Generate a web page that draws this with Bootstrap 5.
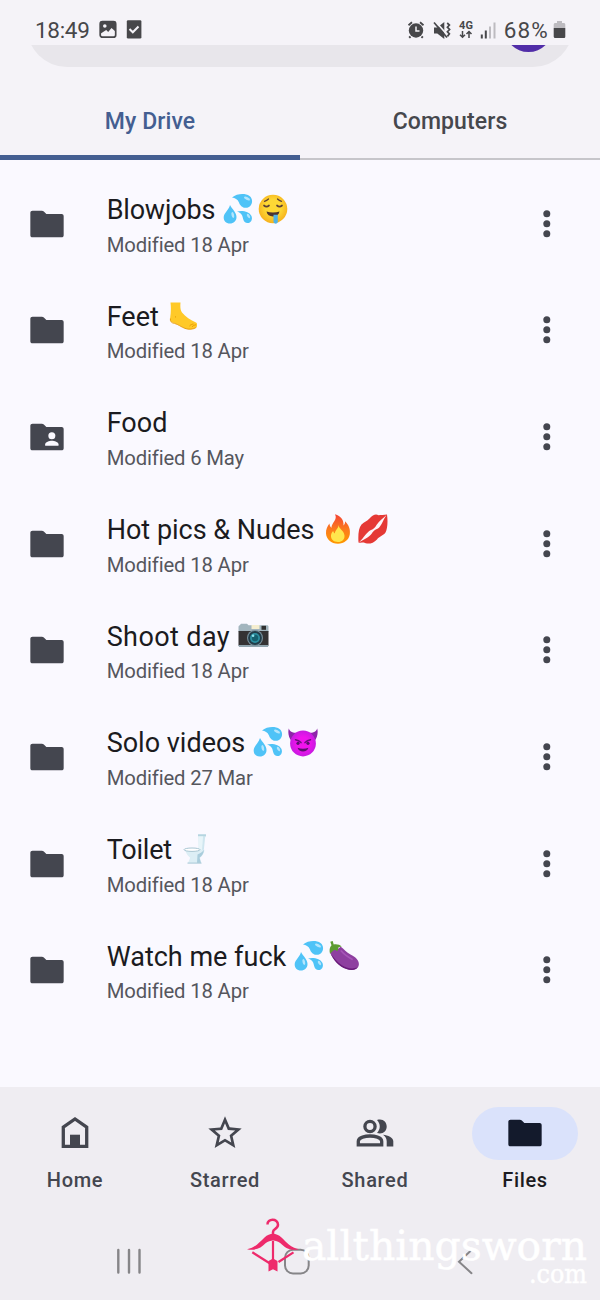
<!DOCTYPE html>
<html lang="en">
<head>
<meta charset="utf-8">
<meta name="viewport" content="width=device-width, initial-scale=1">
<title>Files - My Drive</title>
<link href="https://cdn.jsdelivr.net/npm/bootstrap@5.3.0/dist/css/bootstrap.min.css" rel="stylesheet">
<style>
  body { font-family: Roboto, "Liberation Sans", sans-serif; background: #faf9ff; color: #1b1b20; }
  svg { display: block; flex: none; }
  .phone { width: 600px; height: 1300px; overflow: hidden; }
  .top-area { background: #f5f3f8; height: 160px; }
  .status { height: 45px; padding: 14px 33px 0 35px; color: #47474a; font-size: 22.5px; line-height: 30px; }
  .status .clock { width: 64px; letter-spacing: -.3px; }
  .status .task-icon { margin-left: 9px; }
  .status .charge { margin-left: 4px; letter-spacing: 1.2px; }
  .search-clip { height: 21.5px; padding: 0 26.7px; }
  .search-pill { height: 80px; border-radius: 40px; background: #e8e6eb; padding: 16px 20.500px 0 0; }
  .avatar { width: 49px; height: 49px; background: #512da8; }
  .drive-tabs { height: 93.5px; }
  .drive-tabs .nav-link { height: 100%; padding: 38.6px 0 0; color: #46474d; font-weight: 500; font-size: 23px; line-height: 34px; letter-spacing: .1px; border-bottom: 2px solid #c6c5ca; border-radius: 0; }
  .drive-tabs .nav-link.active { color: #445e91; border-bottom: 5px solid #445e91; }
  .files { padding-top: 10.4px; height: 926.7px; }
  .file-row { height: 106.67px; padding: 0 33.3px 0 26.7px; color: #44464f; }
  .file-text { margin-left: 40px; padding-top: 4.4px; }
  .file-title { height: 34px; font-size: 27px; line-height: 34px; color: #1b1b20; gap: 5px; margin-bottom: 3.600px; }
  .file-title svg { margin-top: -2px; }
  .file-title .label-text { margin-right: 3px; white-space: nowrap; }
  .tight { letter-spacing: -.2px; }
  .wide { letter-spacing: .4px; }
  .file-sub { font-size: 20.3px; line-height: 28px; letter-spacing: -.15px; color: #55565d; }
  .bottom-nav { height: 120px; background: #efedf2; padding-top: 20px; color: #44464f; }
  .pill { width: 106.7px; height: 53.3px; }
  .on .pill { background: #dae2fb; color: #131a2c; }
  .bottom-nav .on { color: #1b1b20; }
  .tab-label { font-size: 20px; font-weight: 500; line-height: 26px; margin-top: 7px; letter-spacing: .65px; }
  .system-nav { height: 93.3px; background: #efedf2; }
  .watermark { left: 240px; top: 8px; }
</style>
</head>
<body>
<svg width="0" height="0" class="position-absolute" aria-hidden="true">
  <defs>
    <symbol id="folder" viewBox="0 0 24 24"><path fill="currentColor" d="M3.300 4h5.600c.5 0 .9.100 1.200.5L11.600 6h9.100c.8 0 1.300.5 1.300 1.300v11.400c0 .8-.5 1.300-1.300 1.300H3.300c-.8 0-1.300-.5-1.300-1.300V5.300C2 4.500 2.500 4 3.300 4z"/></symbol>
    <symbol id="dots" viewBox="0 0 40 40"><g fill="currentColor"><circle cx="19.800" cy="9.800" r="3.500"/><circle cx="19.800" cy="19.800" r="3.500"/><circle cx="19.800" cy="29.800" r="3.500"/></g></symbol>
    <symbol id="drops" viewBox="0 0 30 30">
      <g fill="#4fc3f7"><path d="M9 3.500C14-.5 22-1 26.500 2c4 3 3 9-.5 11-5 2.500-9-1-10-4.500C14.500 5 12 4 9 3.500z"/><path d="M7 11c2 4 6.500 7.500 6.500 12 0 4-3 6.500-6.500 6.500-4 0-6.500-2.500-6.300-6.500C1 19 6 15.500 7 11z"/><path d="M14 17.500c5-1.500 12.500 0 14.500 4.500 1.500 4-1 7.500-4.500 7-4.500-.5-3.500-6-5.500-8.500-1-1.500-2.500-2.500-4.500-3z"/></g>
      <g fill="#b3e5fc"><ellipse cx="24" cy="4.500" rx="3.300" ry="1.500" transform="rotate(25 24 4.500)"/><ellipse cx="9.800" cy="21" rx="1.300" ry="3" transform="rotate(-12 9.800 21)"/><ellipse cx="25.500" cy="22" rx="1.200" ry="2.400" transform="rotate(-35 25.500 22)"/></g>
    </symbol>
    <radialGradient id="gold" cx=".5" cy=".45" r=".55"><stop offset=".5" stop-color="#fdd835"/><stop offset="1" stop-color="#f6b01c"/></radialGradient>
    <symbol id="drool" viewBox="0 0 30 30">
      <circle cx="15" cy="15" r="14.300" fill="url(#gold)"/>
      <g fill="none" stroke="#5d4037" stroke-width="1.200" stroke-linecap="round"><path d="M6.500 7.300c1.500-.3 3-1.200 4-2.300M19.500 5c1 1.100 2.500 2 4 2.300"/><path d="M6 11.500c1.500 1.300 3.500 1.300 5 0M19 11.500c1.500 1.300 3.500 1.300 5 0" stroke-width="1.700"/></g>
      <path d="M8.500 17.500c4 1.300 9 1.300 13 0-.6 3.400-3 4.900-6.500 4.900s-5.900-1.500-6.500-4.900z" fill="#4e342e"/>
      <path d="M15.500 20.800h4.300v6.800c0 2.800-4.300 2.600-4.300 0z" fill="#4fb3e8"/>
    </symbol>
    <symbol id="foot" viewBox="0 0 30 30">
      <path d="M3.500 1.500h10c-.3 4-.3 7.500 1.500 10 3.500 4.500 8.500 7.500 14 10 1.700 1.200 1.500 3.500.3 4.800-2.800 2.300-7.800 2.500-11.300 1-4-1.600-6.500-4-10.500-5.300-3.300-.5-4.700-2.500-4.300-5.500.7-4.500 1-9.500.3-15z" fill="#ffc928"/>
      <path d="M3.400 17.500c-.4 2.800 1 4.500 4.100 4.900 4 1.100 6.500 3.500 10.500 5 3.500 1.400 8.500 1.100 11.300-1M22.500 25c1-1.200 2.500-1.800 4-2M25 26c1-1.300 2.300-2 4-2.200" fill="none" stroke="#e59600" stroke-width=".9"/><path d="M8 15.500l1 .8" stroke="#e59600"/>
    </symbol>
    <linearGradient id="flameFill" x1="0" y1="0" x2="0" y2="1"><stop offset="0" stop-color="#f44336"/><stop offset=".5" stop-color="#fb7a1e"/><stop offset="1" stop-color="#ff9800"/></linearGradient>
    <symbol id="flame" viewBox="0 0 30 30">
      <path d="M12 .3C18 1.800 21 6.500 20.500 11.500c1.300-1 1.700-2.500 1.500-4.200 4 4 5.500 8 4.800 13C26 26 21 29.700 15 29.700 8 29.700 3.500 25.500 3 19.500c-.3-4 1.500-7.500 3.500-10 .1 2 .7 3.500 2 4.200C8.300 9 15 6 12 .3z" fill="url(#flameFill)"/>
      <path d="M15.500 11c.5 4 5.500 5.500 6 10.500.3 4-2.500 6.500-6.500 6.500-4.500 0-7.300-2.700-7-6.700.2-2 1.200-3.300 2.200-4.300.2 1.200.8 2 1.800 2.500C11.500 16.500 15.500 14.500 15.500 11z" fill="#ffe64d"/>
    </symbol>
    <symbol id="kiss" viewBox="0 0 30 30">
      <path d="M.5 28.500C0 21 .5 14 3.500 10.500 6.500 7.500 9 7.500 11.500 4.500 15 0 18.500-.3 20.500 1.200 23 .8 26 1.200 29 .5c1 7 .5 14-1.500 18-2.500 3.500-6 3.500-8.500 7C15 30 9 30.500 6 28.500c-2 0-4 .5-5.500 0z" fill="#e53935"/>
      <path d="M1 28.500C6 23.500 9 18 12.500 16.300c3.500-1.500 4.500-2.800 6-5.300C21 7 25 4.500 28.500 1 25 6 23.500 12 20 14.500c-3.500 1.500-4.300 2.300-6 4.700C11 23.500 6 25 1 28.500z" fill="#fdf4f7"/>
    </symbol>
    <symbol id="camera" viewBox="0 0 30 30">
      <path d="M1 4.500l1.500-1.800h6L10 4.200h18.500c.8 0 1.500.5 1.500 1.500V11H0V6c0-.8.400-1.500 1-1.500z" fill="#a2b5be"/><path d="M0 10h30v14c0 .9-.6 1.500-1.500 1.500h-27C.6 25.500 0 24.900 0 24z" fill="#343233"/>
      <path d="M0 24h30v.5c0 .8-.6 1.400-1.500 1.400h-27c-.9 0-1.500-.6-1.500-1.400z" fill="#90a4ae"/><path d="M13 4h8v4h-8z" fill="#f5eed0"/><path d="M23 4.800h4.500v4H23z" fill="#303030"/>
      <circle cx="16.500" cy="17" r="8" fill="#78909c"/><circle cx="16.500" cy="17" r="6.900" fill="#223d49"/><circle cx="16.500" cy="17" r="5" fill="#2c8fa0"/><circle cx="16.500" cy="17" r="3.200" fill="#16606e"/><circle cx="14.600" cy="14.800" r="1.300" fill="#8ee4ee"/>
    </symbol>
    <radialGradient id="impFill"><stop offset=".5" stop-color="#ef13ed"/><stop offset="1" stop-color="#c71be0"/></radialGradient>
    <symbol id="imp" viewBox="0 0 30 30">
      <path d="M.8 1.500C2 5 5 5.800 9.500 6.200L3.500 14C.5 10.500-.3 5.500.8 1.500zM29.200 1.500C28 5 25 5.800 20.500 6.200l6 7.800c3-3.500 3.800-8.500 2.700-12.500z" fill="#8e24aa"/>
      <circle cx="15" cy="16.500" r="12.900" fill="url(#impFill)"/>
      <path d="M7.500 12.700c2 .3 4 1.300 5.500 2.900M22.500 12.700c-2 .3-4 1.300-5.500 2.900" fill="none" stroke="#6a0f7f" stroke-width="1.500" stroke-linecap="round"/><circle cx="10" cy="16.300" r="1.600" fill="#5a1070"/><circle cx="20" cy="16.300" r="1.600" fill="#5a1070"/>
      <path d="M9.500 20.800c3.300 1.300 7.700 1.300 11 0-1 2.500-2.800 3.700-5.500 3.700s-4.500-1.200-5.500-3.700z" fill="#5a1070"/>
    </symbol>
    <symbol id="toilet" viewBox="0 0 30 30">
      <path d="M18.500.8h7.300v2h-.6l-1.400 13.500h-5z" fill="#cfe6ef"/><path d="M18.500.8h4.700L22 16h-3.200z" fill="#e8f5f9"/><path d="M18 .3h8v1.900h-8z" fill="#b5d5e0"/>
      <path d="M5 15.800h19.500c-.5 4-2 6-4.500 8l1.200 5.200H8l2.200-5.200C7.500 21.800 6 19 5 15.800z" fill="#dceef5"/><path d="M17.500 20.500c3-1 5-2.700 6.500-4.700-.5 4-2 6-4.500 8l1.500 5.200h-4z" fill="#aacddc"/>
      <ellipse cx="12" cy="15.700" rx="8" ry="1.700" fill="#fff" stroke="#9fbfcd" stroke-width=".9"/><path d="M7.500 28.500h14v1.200h-14z" fill="#b0cfdb"/>
    </symbol>
    <symbol id="aubergine" viewBox="0 0 30 30">
      <path d="M4 7.500C8 9 10.500 7.500 11.500 5.500c3.500 2.500 6 6 10 8 5.500 2.500 9 6.500 8.300 10.500-.8 5-6.800 6-12.300 4C9.500 25.200 4.500 18 1.200 12z" fill="#8e3fa0"/>
      <path d="M12.300 10c3 3.500 6 5.500 10.700 8.300" fill="none" stroke="#a656b7" stroke-width="1.800" stroke-linecap="round"/><path d="M1.200 12c3 7 8.500 13.500 16.300 16 4.500 1.600 9 1.200 11.200-1.400-6 1.700-11.200.7-16.200-2.600C8 21 4.500 16.500 1.200 12z" fill="#6a1b7a"/>
      <path d="M1.300.8L3.700 0l1 3.400c3.500-.4 6 .2 8 2.300-1.500-.2-2.700.2-3.700 1.300.3 1.200 0 2.300-1 3.300-.8-1.200-2-1.500-3.300-1L1 12.800c-.8-3.500-.5-6.500 1.500-8.600z" fill="#5d9b31"/>
    </symbol>
  </defs>
</svg>

<div class="phone d-flex flex-column">
  <header class="top-area">
    <div class="status d-flex align-items-center">
      <span class="clock">18:49</span>
      <svg width="18" height="19" viewBox="0 0 18 19"><rect x="1.200" y="1.700" width="15.500" height="15.500" rx="2.300" fill="#f5f3f8" stroke="#47474a" stroke-width="1.700"/><path d="M1 3c0-1 .7-1.500 1.500-1.500h13c1 0 1.500.7 1.500 1.500v9l-4.500-4-3.300 4-2-2L1 14z" fill="#47474a"/><circle cx="5.800" cy="6" r="1.800" fill="#f5f3f8"/></svg>
      <svg class="task-icon me-auto" width="16" height="19" viewBox="0 0 16 19"><rect x=".8" y=".2" width="14.600" height="18.300" rx="1.300" fill="#47474a"/><path d="M3.500 9l3.300 3.300 5.700-5.800" fill="none" stroke="#f5f3f8" stroke-width="2"/></svg>
      <svg width="95" height="22" viewBox="0 0 95 22" fill="none" stroke="#47474a">
        <circle cx="11" cy="11.500" r="7.200" fill="#47474a" stroke="none"/><path d="M3.500 6.200L7 3.300M18.500 6.200L15 3.300" stroke-width="1.800"/><path d="M5.500 17.500l-1.300 1.300M16.500 17.500l1.300 1.300" stroke-width="2"/><path d="M11 7.500v4.500h3.500" stroke="#f5f3f8" stroke-width="1.500"/>
        <path d="M29 8.500h3.300l7-5.500v17l-7-5.500H29z" fill="#47474a" stroke="none"/><path d="M30.500 2.500l14 16" stroke="#f5f3f8" stroke-width="1.800"/><path d="M29 3.500l13 15" stroke-width="1.700"/><path d="M42.200 4l2.200 2-2 2.200 2.200 2.300-2.200 2.200 2 2.200-2 2.500" stroke-width="1.700"/>
        <text x="54" y="10" font-family="Roboto" font-size="11" font-weight="700" fill="#47474a" stroke="none" textLength="14">4G</text><path d="M57.500 12v6.500M55 15.800l2.500 2.500 2.500-2.500M64 19v-6.500M61.500 15L64 12.500l2.500 2.500" stroke-width="1.500"/>
        <path d="M76.800 15.500v4M80.800 11.500v8" stroke-width="2"/><path d="M85 7.500v12M89.500 3.500v16" stroke="#bdbbc0" stroke-width="2"/>
      </svg>
      <span class="charge">68%</span>
      <svg width="14" height="20" viewBox="0 0 14 20" class="ms-1"><path d="M4 1h5v2h1.800c.8 0 1.500.7 1.500 1.500V8H.7V4.500C.7 3.700 1.400 3 2.200 3H4z" fill="#bdbbc0"/><path d="M.7 8h11.600v8.500c0 1-.6 1.500-1.500 1.500H2.200c-.9 0-1.500-.6-1.500-1.500z" fill="#47474a"/></svg>
    </div>
    <div class="search-clip d-flex align-items-end overflow-hidden">
      <div class="search-pill w-100 d-flex justify-content-end"><div class="avatar rounded-circle"></div></div>
    </div>
    <nav class="drive-tabs nav nav-justified">
      <a class="nav-link active" href="#">My Drive</a>
      <a class="nav-link" href="#">Computers</a>
    </nav>
  </header>

  <main class="files">
    <div class="file-row d-flex align-items-center"><svg width="40" height="40"><use href="#folder"/></svg><div class="file-text flex-grow-1"><div class="file-title d-flex align-items-center"><span class="label-text tight">Blowjobs</span><svg width="30" height="30"><use href="#drops"/></svg><svg width="30" height="30"><use href="#drool"/></svg></div><div class="file-sub">Modified 18 Apr</div></div><svg width="40" height="40"><use href="#dots"/></svg></div>
    <div class="file-row d-flex align-items-center"><svg width="40" height="40"><use href="#folder"/></svg><div class="file-text flex-grow-1"><div class="file-title d-flex align-items-center"><span class="label-text">Feet</span><svg width="30" height="30"><use href="#foot"/></svg></div><div class="file-sub">Modified 18 Apr</div></div><svg width="40" height="40"><use href="#dots"/></svg></div>
    <div class="file-row d-flex align-items-center"><svg width="40" height="40" viewBox="0 0 24 24"><use href="#folder" width="24" height="24"/><circle cx="14.900" cy="11.200" r="2.100" fill="#faf9ff"/><path d="M10.900 17.200v-.8c0-1.500 2.500-2.200 4-2.200s4 .7 4 2.200v.8z" fill="#faf9ff"/></svg><div class="file-text flex-grow-1"><div class="file-title d-flex align-items-center"><span class="label-text">Food</span></div><div class="file-sub">Modified 6 May</div></div><svg width="40" height="40"><use href="#dots"/></svg></div>
    <div class="file-row d-flex align-items-center"><svg width="40" height="40"><use href="#folder"/></svg><div class="file-text flex-grow-1"><div class="file-title d-flex align-items-center"><span class="label-text">Hot pics &amp; Nudes</span><svg width="30" height="30"><use href="#flame"/></svg><svg width="30" height="30"><use href="#kiss"/></svg></div><div class="file-sub">Modified 18 Apr</div></div><svg width="40" height="40"><use href="#dots"/></svg></div>
    <div class="file-row d-flex align-items-center"><svg width="40" height="40"><use href="#folder"/></svg><div class="file-text flex-grow-1"><div class="file-title d-flex align-items-center"><span class="label-text wide">Shoot day</span><svg width="31" height="30"><use href="#camera"/></svg></div><div class="file-sub">Modified 18 Apr</div></div><svg width="40" height="40"><use href="#dots"/></svg></div>
    <div class="file-row d-flex align-items-center"><svg width="40" height="40"><use href="#folder"/></svg><div class="file-text flex-grow-1"><div class="file-title d-flex align-items-center"><span class="label-text">Solo videos</span><svg width="30" height="30"><use href="#drops"/></svg><svg width="30" height="30"><use href="#imp"/></svg></div><div class="file-sub">Modified 27 Mar</div></div><svg width="40" height="40"><use href="#dots"/></svg></div>
    <div class="file-row d-flex align-items-center"><svg width="40" height="40"><use href="#folder"/></svg><div class="file-text flex-grow-1"><div class="file-title d-flex align-items-center"><span class="label-text tight">Toilet</span><svg width="30" height="30"><use href="#toilet"/></svg></div><div class="file-sub">Modified 18 Apr</div></div><svg width="40" height="40"><use href="#dots"/></svg></div>
    <div class="file-row d-flex align-items-center"><svg width="40" height="40"><use href="#folder"/></svg><div class="file-text flex-grow-1"><div class="file-title d-flex align-items-center"><span class="label-text">Watch me fuck</span><svg width="30" height="30"><use href="#drops"/></svg><svg width="30" height="30"><use href="#aubergine"/></svg></div><div class="file-sub">Modified 18 Apr</div></div><svg width="40" height="40"><use href="#dots"/></svg></div>
  </main>

  <nav class="bottom-nav d-flex text-center">
    <div class="col-3 d-flex flex-column align-items-center"><div class="pill d-flex align-items-center justify-content-center"><svg width="40" height="40" viewBox="0 0 40 40"><path d="M8.300 33.300V14.200L20 6l11.700 8.200v19.100z" fill="none" stroke="currentColor" stroke-width="3.300"/><path d="M15 21.700h10v12H15z" fill="currentColor"/></svg></div><div class="tab-label">Home</div></div>
    <div class="col-3 d-flex flex-column align-items-center"><div class="pill d-flex align-items-center justify-content-center"><svg width="40" height="40" viewBox="0 0 24 24"><path fill="currentColor" d="M22 9.240l-7.190-.62L12 2 9.190 8.630 2 9.240l5.460 4.730L5.820 21 12 17.270 18.180 21l-1.630-7.030L22 9.240zM12 15.400l-3.760 2.270 1-4.280-3.320-2.880 4.380-.38L12 6.100l1.710 4.040 4.380.38-3.320 2.880 1 4.280L12 15.400z"/></svg></div><div class="tab-label">Starred</div></div>
    <div class="col-3 d-flex flex-column align-items-center"><div class="pill d-flex align-items-center justify-content-center"><svg width="40" height="40" viewBox="0 0 40 40"><circle cx="15" cy="13.500" r="5.100" fill="none" stroke="currentColor" stroke-width="3.300"/><path d="M3.300 31.800v-3.500c0-4.200 7.500-5.300 11.700-5.300s11.700 1.100 11.700 5.300v3.500z" fill="none" stroke="currentColor" stroke-width="3.300"/><path d="M22 7c5.500-1.800 9.700 1.500 9.700 6.500s-4.200 8.200-9.700 6.500c3.700-4.200 3.700-8.800 0-13zM28 21.700c5 .7 10.300 2.700 10.300 6.600v5.200h-6.600v-5.200c0-2.900-1.500-5-3.700-6.600z" fill="currentColor"/></svg></div><div class="tab-label">Shared</div></div>
    <div class="col-3 on d-flex flex-column align-items-center"><div class="pill rounded-pill d-flex align-items-center justify-content-center"><svg width="40" height="40"><use href="#folder"/></svg></div><div class="tab-label">Files</div></div>
  </nav>

  <footer class="system-nav position-relative">
    <svg width="600" height="93.300" viewBox="0 0 600 93.300" fill="none" stroke="#868588" stroke-width="2" stroke-linecap="round"><path d="M118.300 43v22.500M129 43v22.500M139.500 43v22.500" stroke-width="2.400"/><rect x="285" y="42.800" width="23.700" height="23.700" rx="8"/><path d="M471 43.500L459 54.700l12.500 11.500"/></svg>
    <svg class="watermark position-absolute" width="360" height="80" viewBox="0 0 360 80">
      <g fill="none" stroke="#ee2a6b" stroke-width="2.200"><path d="M27.500 9.500c-.5-6 10.500-6.500 10.500.3 0 4.500-5 3.500-5 7.200v4" stroke-width="2.500"/><path d="M33 26v22M12.300 37.300L30 48.500M53.500 37.300L38.500 47"/></g>
      <path d="M7 34.200c8-1.200 12.500-7 17.500-11.700 5.500-5 11.500-5 17 0 5 4.700 9.500 10.500 17.500 11.700-8.500 2-14-1.500-18.500-6-5-3.700-10-3.700-15 0-4.500 4.500-10 8-18.500 6z" fill="#ee2a6b"/><path d="M28.500 46l4.500-2.500 4.500 2.500v10.500l-4.500-2.300-4.500 2.300z" fill="#ee2a6b"/>
      <g fill="#fff" stroke="#fff" stroke-width=".5" font-family="'DejaVu Serif', serif"><text x="62" y="44.700" font-size="41" textLength="285" lengthAdjust="spacingAndGlyphs">allthingsworn</text><text x="289" y="67.500" font-size="26" textLength="58" lengthAdjust="spacingAndGlyphs">.com</text></g>
    </svg>
  </footer>
</div>
<script src="https://cdn.jsdelivr.net/npm/bootstrap@5.3.0/dist/js/bootstrap.bundle.min.js"></script>
</body>
</html>
